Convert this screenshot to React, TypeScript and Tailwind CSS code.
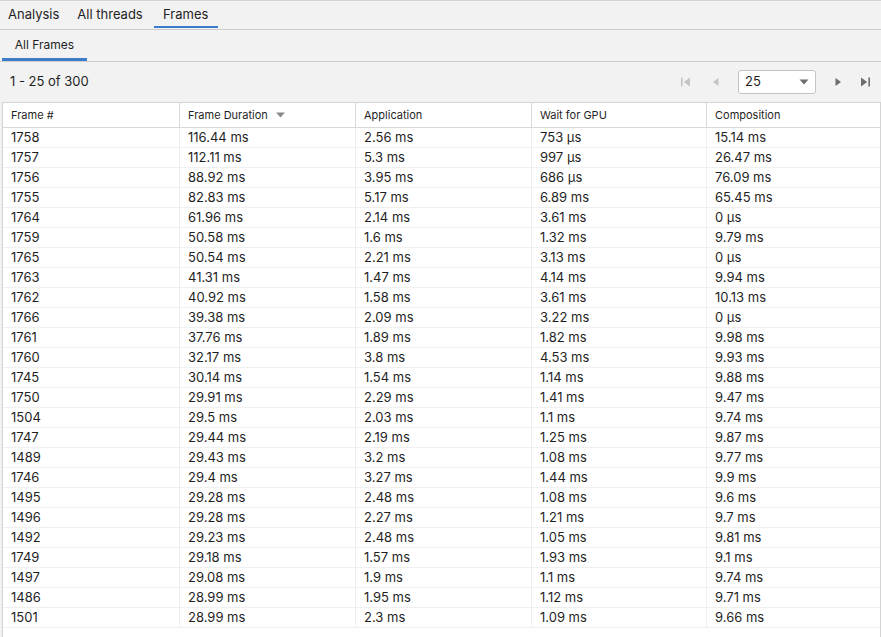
const rows: [string, string, string, string, string][] = [
  ["1758", "116.44 ms", "2.56 ms", "753 µs", "15.14 ms"],
  ["1757", "112.11 ms", "5.3 ms", "997 µs", "26.47 ms"],
  ["1756", "88.92 ms", "3.95 ms", "686 µs", "76.09 ms"],
  ["1755", "82.83 ms", "5.17 ms", "6.89 ms", "65.45 ms"],
  ["1764", "61.96 ms", "2.14 ms", "3.61 ms", "0 µs"],
  ["1759", "50.58 ms", "1.6 ms", "1.32 ms", "9.79 ms"],
  ["1765", "50.54 ms", "2.21 ms", "3.13 ms", "0 µs"],
  ["1763", "41.31 ms", "1.47 ms", "4.14 ms", "9.94 ms"],
  ["1762", "40.92 ms", "1.58 ms", "3.61 ms", "10.13 ms"],
  ["1766", "39.38 ms", "2.09 ms", "3.22 ms", "0 µs"],
  ["1761", "37.76 ms", "1.89 ms", "1.82 ms", "9.98 ms"],
  ["1760", "32.17 ms", "3.8 ms", "4.53 ms", "9.93 ms"],
  ["1745", "30.14 ms", "1.54 ms", "1.14 ms", "9.88 ms"],
  ["1750", "29.91 ms", "2.29 ms", "1.41 ms", "9.47 ms"],
  ["1504", "29.5 ms", "2.03 ms", "1.1 ms", "9.74 ms"],
  ["1747", "29.44 ms", "2.19 ms", "1.25 ms", "9.87 ms"],
  ["1489", "29.43 ms", "3.2 ms", "1.08 ms", "9.77 ms"],
  ["1746", "29.4 ms", "3.27 ms", "1.44 ms", "9.9 ms"],
  ["1495", "29.28 ms", "2.48 ms", "1.08 ms", "9.6 ms"],
  ["1496", "29.28 ms", "2.27 ms", "1.21 ms", "9.7 ms"],
  ["1492", "29.23 ms", "2.48 ms", "1.05 ms", "9.81 ms"],
  ["1749", "29.18 ms", "1.57 ms", "1.93 ms", "9.1 ms"],
  ["1497", "29.08 ms", "1.9 ms", "1.1 ms", "9.74 ms"],
  ["1486", "28.99 ms", "1.95 ms", "1.12 ms", "9.71 ms"],
  ["1501", "28.99 ms", "2.3 ms", "1.09 ms", "9.66 ms"],
];

const headers = ["Frame #", "Frame Duration", "Application", "Wait for GPU", "Composition"];

const gridCols = "grid grid-cols-[177px_176px_176px_175px_1fr]";

function NavIcon({ kind, disabled }: { kind: "first" | "prev" | "next" | "last"; disabled?: boolean }) {
  const fill = disabled ? "#c4c4c4" : "#6e6e6e";
  return (
    <svg width="12" height="12" viewBox="0 0 12 12">
      {kind === "first" && (
        <>
          <rect x="1" y="1.5" width="1.6" height="9" fill={fill} />
          <path d="M10 1.5 L10 10.5 L3.8 6 Z" fill={fill} />
        </>
      )}
      {kind === "prev" && <path d="M8.5 2 L8.5 10 L3 6 Z" fill={fill} />}
      {kind === "next" && <path d="M3.5 2 L3.5 10 L9 6 Z" fill={fill} />}
      {kind === "last" && (
        <>
          <path d="M2 1.5 L2 10.5 L8.2 6 Z" fill={fill} />
          <rect x="9.4" y="1.5" width="1.6" height="9" fill={fill} />
        </>
      )}
    </svg>
  );
}

export default function App() {
  return (
    <div
      className="w-[881px] h-[637px] overflow-hidden bg-[#f2f2f2] text-[#1f1f1f] border-t border-[#d4d4d4]"
      style={{ fontFamily: "Inter, 'Noto Sans', sans-serif" }}
    >
      {/* top tabs */}
      <div className="flex h-[29px] border-b border-[#cdcdcd] text-[13px]">
        <div className="px-2 flex items-center">Analysis</div>
        <div className="px-[10px] flex items-center">All threads</div>
        <div className="relative flex items-center ml-[1px] w-[64px] justify-center">
          Frames
          <div className="absolute left-0 right-0 bottom-[1px] h-[2px] bg-[#3d7cc9]" />
        </div>
      </div>

      {/* sub tabs */}
      <div className="flex h-[32px] border-b border-[#cdcdcd] text-[12px] pl-[2px]">
        <div className="relative w-[85px] flex items-center justify-center pb-[2px]">
          All Frames
          <div className="absolute left-0 right-0 bottom-0 h-[3px] bg-[#3d7cc9]" />
        </div>
      </div>

      {/* toolbar */}
      <div className="flex items-center h-[40px] pl-[10px] pr-[10px] text-[13px]">
        <div>1 - 25 of 300</div>
        <div className="ml-auto flex items-center">
          <div className="mr-[18px] flex"><NavIcon kind="first" disabled /></div>
          <div className="mr-[16px] flex"><NavIcon kind="prev" disabled /></div>
          <div className="w-[78px] h-[24px] bg-white border border-[#c4c4c4] rounded-[3px] flex items-center pl-[6px] pr-[6px]">
            <span>25</span>
            <svg className="ml-auto" width="10" height="6" viewBox="0 0 10 6">
              <path d="M0.5 0.5 L9.5 0.5 L5 5.5 Z" fill="#6e6e6e" />
            </svg>
          </div>
          <div className="ml-[16px] flex"><NavIcon kind="next" /></div>
          <div className="ml-[15px] flex"><NavIcon kind="last" /></div>
        </div>
      </div>

      {/* table */}
      <div className="ml-[2px] bg-white border-l-[1px] border-t border-r border-[#d4d4d4] h-[540px]">
        <div className={`${gridCols} h-[25px] border-b border-[#d9d9d9] text-[11px]`}>
          {headers.map((h, i) => (
            <div
              key={h}
              className={`flex items-center px-2 ${i < 4 ? "border-r border-[#d9d9d9]" : ""}`}
            >
              {h}
              {i === 1 && (
                <svg className="ml-[8px]" width="9" height="6" viewBox="0 0 9 6">
                  <path d="M0 0.5 L9 0.5 L4.5 5.5 Z" fill="#8a8a8a" />
                </svg>
              )}
            </div>
          ))}
        </div>
        {rows.map((r) => (
          <div key={r[0]} className={`${gridCols} h-[20px] border-b border-[#efefef] text-[13px]`}>
            {r.map((c, i) => (
              <div
                key={i}
                className={`flex items-center px-2 ${i < 4 ? "border-r border-[#efefef]" : ""}`}
              >
                {c}
              </div>
            ))}
          </div>
        ))}
      </div>
    </div>
  );
}
